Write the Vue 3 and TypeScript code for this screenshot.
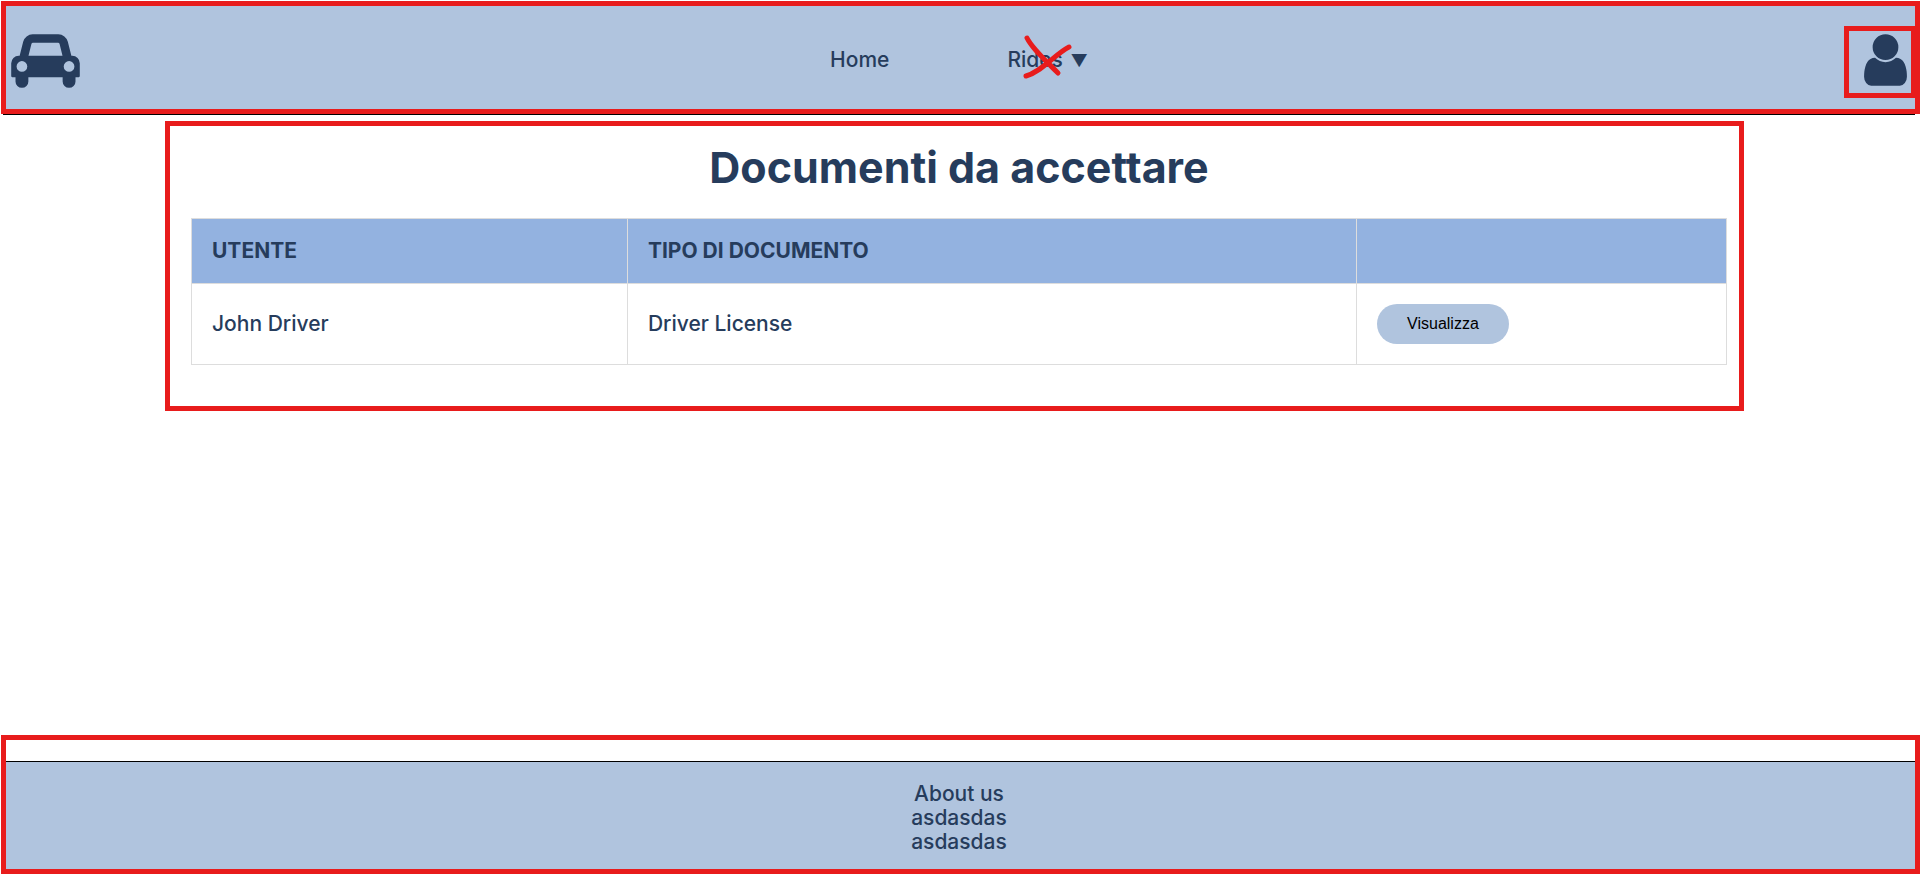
<script setup lang="ts">
interface DocumentRow {
  id: number
  user: string
  kind: string
}

const documents: DocumentRow[] = [{ id: 1, user: 'John Driver', kind: 'Driver License' }]
const footerLines: string[] = ['About us', 'asdasdas', 'asdasdas']
</script>

<template>
  <div class="page">
    <header class="topbar marked">
      <a class="logo" href="#" aria-label="Home page">
        <svg class="icon-car" viewBox="0 0 2048 1792" aria-hidden="true">
          <path
            d="M480 1088q0-66-47-113t-113-47-113 47-47 113 47 113 113 47 113-47 47-113zm36-320h1016l-89-357q-2-8-14-17.5t-21-9.5h-768q-9 0-21 9.5t-14 17.5zm1372 320q0-66-47-113t-113-47-113 47-47 113 47 113 113 47 113-47 47-113zm160-96v384q0 14-9 23t-23 9h-96v128q0 80-56 136t-136 56-136-56-56-136v-128h-1024v128q0 80-56 136t-136 56-136-56-56-136v-128h-96q-14 0-23-9t-9-23v-384q0-93 65.5-158.5t158.5-65.5h28l105-419q23-94 104-157.5t179-63.5h768q98 0 179 63.5t104 157.5l105 419h28q93 0 158.5 65.5t65.5 158.5z"
          />
        </svg>
      </a>
      <nav class="nav">
        <a href="#">Home</a>
        <a class="rides" href="#">
          Rides <span class="caret">▼</span>
          <svg class="cross" viewBox="0 0 52 46" aria-hidden="true">
            <path d="M4 4C9 14 20 24 35 39" />
            <path d="M46 13C32 20 20 37 3 42" />
          </svg>
        </a>
      </nav>
      <a class="profile" href="#" aria-label="Profile">
        <svg class="icon-user" viewBox="256 0 1280 1792" aria-hidden="true">
          <path
            d="M1536 1399q0 109-62.5 187t-150.5 78h-854q-88 0-150.5-78t-62.5-187q0-85 8.5-160.5t31.5-152 58.5-131 94-89 134.5-34.5q131 128 313 128t313-128q76 0 134.5 34.5t94 89 58.5 131 31.5 152 8.5 160.5zm-256-887q0 159-112.5 271.5t-271.5 112.5-271.5-112.5-112.5-271.5 112.5-271.5 271.5-112.5 271.5 112.5 112.5 271.5z"
          />
        </svg>
      </a>
    </header>

    <main class="content marked">
      <h1>Documenti da accettare</h1>
      <table>
        <colgroup>
          <col class="col-user" />
          <col class="col-kind" />
          <col />
        </colgroup>
        <thead>
          <tr>
            <th scope="col">UTENTE</th>
            <th scope="col">TIPO DI DOCUMENTO</th>
            <td></td>
          </tr>
        </thead>
        <tbody>
          <tr v-for="row in documents" :key="row.id">
            <td>{{ row.user }}</td>
            <td>{{ row.kind }}</td>
            <td><button type="button">Visualizza</button></td>
          </tr>
        </tbody>
      </table>
    </main>

    <footer class="footer marked">
      <p v-for="(line, index) in footerLines" :key="index">{{ line }}</p>
    </footer>
  </div>
</template>

<style>
body {
  margin: 0;
  background: #fff;
}
</style>

<style scoped>
.page {
  --ink: #263c5c;
  --bar: #b0c4de;
  --mark: #e81c1c;
  box-sizing: border-box;
  display: flex;
  flex-direction: column;
  min-height: 100vh;
  padding: 5px 6px 2px 3px;
  color: var(--ink);
  font-family: Inter, "Noto Sans", sans-serif;
  font-size: 21px;
  font-weight: 500;
  font-variant-ligatures: none;
  line-height: 24px;
}

a {
  color: inherit;
  text-decoration: none;
}

svg {
  display: block;
  fill: var(--ink);
}

.marked,
.profile {
  position: relative;
}

.marked::after,
.profile::after {
  content: "";
  position: absolute;
  border: 5px solid var(--mark);
  pointer-events: none;
}

.topbar {
  display: grid;
  grid-template-columns: 1fr auto 1fr;
  align-items: center;
  padding: 25px 8px 24px;
  background: var(--bar);
  border-bottom: 1px solid #000;
}

.topbar::after {
  inset: -4px -5px 0 -2px;
}

.icon-car {
  width: 69px;
  height: 60px;
}

.logo {
  justify-self: start;
}

.nav {
  display: flex;
  gap: 118px;
}

.rides {
  position: relative;
}

.caret {
  margin-left: 2px;
  font-size: 17px;
}

.cross {
  position: absolute;
  left: 16px;
  top: -14px;
  width: 52px;
  height: 46px;
  fill: none;
  stroke: var(--mark);
  stroke-width: 5;
  stroke-linecap: round;
}

.profile {
  justify-self: end;
}

.profile::after {
  inset: -4px -9px -8px -20px;
}

.icon-user {
  width: 43px;
  height: 60px;
}

.content {
  padding: 28px 0 0;
  margin: 0 188px;
}

.content::after {
  inset: 6px -17px -46px -26px;
}

h1 {
  margin: 0 0 27px;
  font-size: 43px;
  font-weight: 700;
  line-height: 48px;
  text-align: center;
}

table {
  width: 100%;
  table-layout: fixed;
  border-collapse: collapse;
}

.col-user {
  width: 28.4%;
}

.col-kind {
  width: 47.5%;
}

th,
td {
  padding: 20px;
  border: 1px solid #ddd;
  text-align: left;
}

th {
  font-weight: 700;
}

thead {
  background: #93b2e0;
}

button {
  display: block;
  height: 40px;
  padding: 0 30px;
  border: 0;
  border-radius: 20px;
  background: var(--bar);
  color: #000;
  font: 16px "Liberation Sans", Arial, sans-serif;
}

.footer {
  margin-top: auto;
  padding: 20px 0 19px;
  background: var(--bar);
  border-top: 1px solid #000;
  text-align: center;
}

.footer::after {
  inset: -27px -5px -1px -2px;
}

.footer p {
  margin: 0;
}
</style>
